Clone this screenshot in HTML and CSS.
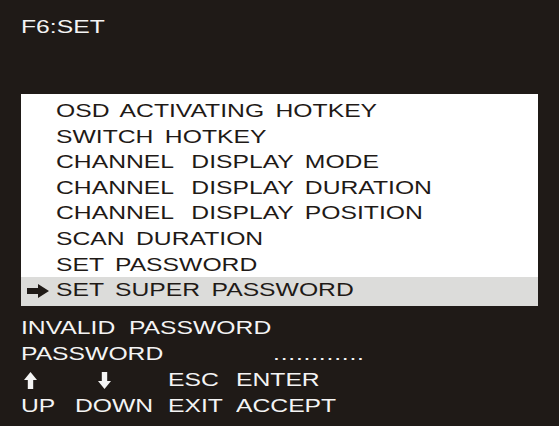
FILE: index.html
```html
<!DOCTYPE html>
<html>
<head>
<meta charset="utf-8">
<link rel="stylesheet" href="styles.css">
</head>
<body>
<div class="screen">
  <div class="title"><span class="t">F6:SET</span></div>
  <ul class="menu">
    <li class="item"><span class="slot"></span><span class="t">OSD ACTIVATING HOTKEY</span></li>
    <li class="item"><span class="slot"></span><span class="t">SWITCH HOTKEY</span></li>
    <li class="item"><span class="slot"></span><span class="t">CHANNEL&#8194;&#8201;DISPLAY MODE</span></li>
    <li class="item"><span class="slot"></span><span class="t">CHANNEL&#8194;&#8201;DISPLAY DURATION</span></li>
    <li class="item"><span class="slot"></span><span class="t">CHANNEL&#8194;&#8201;DISPLAY POSITION</span></li>
    <li class="item"><span class="slot"></span><span class="t">SCAN DURATION</span></li>
    <li class="item"><span class="slot"></span><span class="t">SET PASSWORD</span></li>
    <li class="item selected"><span class="slot"><svg class="pointer" width="22" height="14" viewBox="0 0 22 14"><path d="M0 4 H11 V0 L22 7 L11 14 V10 H0 Z" fill="#1f1a17"/></svg></span><span class="t">SET SUPER PASSWORD</span></li>
  </ul>
  <div class="status">
    <div class="line"><span class="t">INVALID&nbsp; PASSWORD</span></div>
    <div class="pw"><span class="t">PASSWORD</span><span class="t dots">............</span></div>
    <div class="keys">
      <span class="key"><svg width="13" height="17" viewBox="0 0 13 17"><path d="M6.5 0 L13 8 H9.2 V17 H3.8 V8 H0 Z" fill="#f4f4f4"/></svg></span>
      <span class="key down-key"><svg width="13" height="17" viewBox="0 0 13 17"><path d="M6.5 17 L13 9 H9.2 V0 H3.8 V9 H0 Z" fill="#f4f4f4"/></svg></span>
      <span class="t">ESC</span>
      <span class="t">ENTER</span>
      <span class="t">UP</span>
      <span class="t">DOWN</span>
      <span class="t">EXIT</span>
      <span class="t">ACCEPT</span>
    </div>
  </div>
</div>
</body>
</html>
```
FILE: styles.css
```css
html, body {
  margin: 0;
  padding: 0;
  background: #1f1a17;
}
body {
  width: 559px;
  height: 426px;
  overflow: hidden;
  font-family: "Liberation Sans", Arial, sans-serif;
  font-size: 19px;
  color: #f4f4f4;
}
.screen {
  box-sizing: border-box;
  width: 559px;
  height: 426px;
  padding: 14px 0 0 21px;
}
.t {
  display: inline-block;
  white-space: pre;
  transform: scaleX(1.3);
  transform-origin: left center;
}
.title {
  line-height: 26px;
  height: 26px;
}
.menu {
  list-style: none;
  margin: 54px 0 0 0;
  padding: 4px 0 0 0;
  width: 517px;
  height: 208px;
  background: #ffffff;
  color: #1f1a17;
  display: flex;
  flex-direction: column;
}
.menu .t {
  word-spacing: 3.5px;
}
.item {
  display: flex;
  align-items: flex-start;
  height: 25.6px;
  line-height: 25.6px;
  padding-left: 6px;
  flex: none;
}
.item.selected {
  flex: 1;
  background: #dcdcda;
}
.slot {
  width: 29px;
  flex: none;
  display: flex;
  align-items: center;
  height: 25.6px;
}
.pointer {
  display: block;
  margin-top: 2px;
}
.status {
  margin-top: 9px;
  width: 400px;
}
.line, .pw {
  line-height: 26px;
  height: 26px;
}
.pw {
  display: grid;
  grid-template-columns: 252px auto;
}
.dots {
  letter-spacing: 0.6px;
}
.keys {
  display: grid;
  grid-template-columns: 54px 93px 68px auto;
  grid-auto-rows: 26px;
  line-height: 26px;
}
.key {
  display: flex;
  align-items: center;
  padding-left: 3px;
}
.key svg {
  display: block;
  margin-top: 1px;
}
.down-key {
  padding-left: 23px;
}
```
